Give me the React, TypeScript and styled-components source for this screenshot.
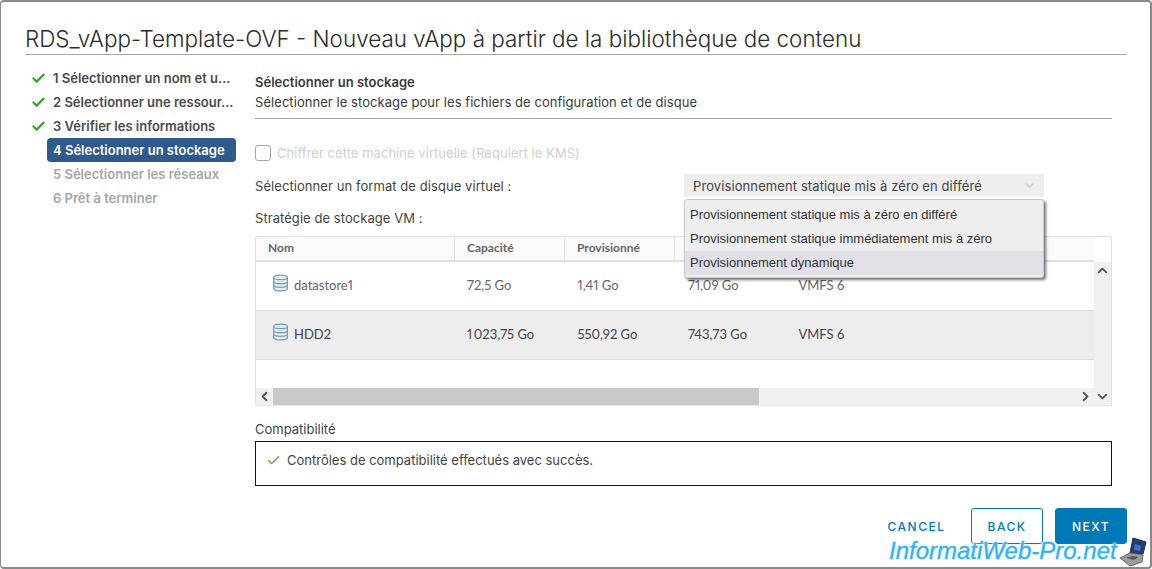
import React from "react";
import styled, { createGlobalStyle } from "styled-components";
import { ChevronDown, ChevronLeft, ChevronRight, ChevronUp, Check } from "lucide-react";

const Global = createGlobalStyle`
  html, body { margin: 0; padding: 0; background: #fff; }
  body { font-family: Inter, "Noto Sans", sans-serif; color: #333; }
  * { box-sizing: border-box; }
`;

const Modal = styled.div`
  position: relative;
  width: 1152px;
  height: 569px;
  overflow: hidden;
  background: #fff;
  border: 1px solid #8a8a8a;
  border-width: 2px 2px 2px 1px;
  border-radius: 4px;
  padding: 21px 24px 0 24px;
`;

const Title = styled.h1`
  margin: 0;
  height: 32px;
  width: 1102px;
  border-bottom: 1px solid #a8a8a8;
  font-size: 22.45px;
  line-height: 31px;
  font-weight: 300;
  color: #2b2b2b;
  white-space: nowrap;
`;

const Body = styled.div`
  display: flex;
  margin-top: 11px;
`;

const Steps = styled.ul`
  list-style: none;
  margin: 0;
  padding: 0;
  width: 230px;
  flex: none;
`;

const Step = styled.li<{ $state: "done" | "active" | "todo" }>`
  display: flex;
  align-items: center;
  height: 24px;
  position: relative;
  margin-left: 22px;
  width: 189px;
  padding-left: 6px;
  font-size: 13px;
  font-weight: 600;
  white-space: nowrap;
  border-radius: 4px;
  color: ${(p) => (p.$state === "todo" ? "#a6a6a6" : p.$state === "active" ? "#fff" : "#4a4a4a")};
  background: ${(p) => (p.$state === "active" ? "#2f5a8c" : "transparent")};
`;

const StepCheck = styled.span`
  position: absolute;
  left: -16px;
  top: 5px;
  display: flex;
  color: #3f9e2e;
`;

const Content = styled.div`
  width: 857px;
  flex: none;
`;

const SectionTitle = styled.div`
  font-size: 13px;
  font-weight: 600;
  line-height: 20px;
  margin-top: 6px;
  color: #3a3a3a;
`;

const SectionSub = styled.div`
  font-size: 13px;
  line-height: 20px;
  letter-spacing: 0.06px;
  padding-bottom: 6px;
  border-bottom: 1px solid #a8a8a8;
  color: #3a3a3a;
`;

const CheckRow = styled.label`
  display: flex;
  align-items: center;
  gap: 6px;
  margin-top: 26px;
  height: 16px;
  font-size: 13px;
  letter-spacing: 0.04px;
  color: #cfcfcf;
`;

const Box = styled.span`
  width: 16px;
  height: 16px;
  border: 1px solid #a8a8a8;
  border-radius: 3px;
  display: block;
`;

const FormatRow = styled.div`
  display: flex;
  align-items: center;
  margin-top: 13px;
  height: 23px;
  font-size: 13px;
  color: #444;
`;

const FormatLabel = styled.span`
  width: 429px;
  letter-spacing: 0.07px;
`;

const Select = styled.div`
  width: 360px;
  height: 23px;
  background: #eee;
  display: flex;
  align-items: center;
  justify-content: space-between;
  padding: 0 8px 0 9px;
  font-size: 13px;
  letter-spacing: 0.1px;
  color: #444;
  svg { color: #c4c4c4; }
`;

const PolicyLabel = styled.div`
  margin-top: 12px;
  font-size: 13px;
  line-height: 18px;
  letter-spacing: 0.06px;
  color: #444;
`;

const Menu = styled.div`
  position: absolute;
  left: 683px;
  top: 197px;
  width: 360px;
  height: 79px;
  background: #eeeeee;
  border: 1px solid #c9c9c9;
  border-radius: 3px;
  box-shadow: 2px 2px 3px rgba(0, 0, 0, 0.55);
  padding-top: 3px;
  z-index: 2;
`;

const MenuItem = styled.div<{ $hover?: boolean }>`
  height: 24px;
  line-height: 24px;
  padding-left: 5px;
  font-family: "Liberation Sans", sans-serif;
  font-size: 13px;
  color: #333;
  background: ${(p) => (p.$hover ? "#e0e0e6" : "transparent")};
`;

const Grid = styled.div`
  margin-top: 9px;
  width: 857px;
  height: 170px;
  border: 1px solid #e0e0e0;
  border-bottom-color: #e4e4e4;
  border-radius: 3px 3px 0 0;
  display: grid;
  grid-template-columns: 1fr 17px;
  grid-template-rows: 1fr 17px;
  font-family: Lato, sans-serif;
  overflow: hidden;
`;

const GridMain = styled.div`
  min-width: 0;
  overflow: hidden;
`;

const Head = styled.div`
  display: grid;
  grid-template-columns: 199px 110px 110px 110px 1fr;
  height: 25px;
  width: 855px;
  background: #fafafa;
  border-bottom: 2px solid #dedede;
`;

const HeadCell = styled.div`
  padding-left: 12px;
  line-height: 22px;
  font-size: 12px;
  font-weight: 700;
  color: #666;
  border-right: 1px solid #e4e4e4;
  &:last-child { border-right: 0; }
`;

const Row = styled.div<{ $sel?: boolean }>`
  display: grid;
  grid-template-columns: 198px 110.5px 110.5px 110.5px 1fr;
  align-items: center;
  height: 49px;
  background: ${(p) => (p.$sel ? "#ededed" : "#fff")};
  border-bottom: 1px solid #dddddd;
  font-size: 13px;
  font-variant-numeric: proportional-nums;
  color: ${(p) => (p.$sel ? "#444" : "#666")};
`;

const Cell = styled.div`
  padding-left: 13px;
  padding-bottom: 2px;
  white-space: nowrap;
`;

const NameCell = styled(Cell)`
  display: flex;
  align-items: center;
  gap: 5px;
  padding-left: 16px;
  svg { margin-top: -4px; }
`;

const VBar = styled.div`
  grid-row: 1;
  grid-column: 2;
  background: #f0f0f0;
  margin-top: 25px;
  padding-top: 1px;
  display: flex;
  justify-content: center;
  align-items: flex-start;
  color: #555;
`;

const HBar = styled.div`
  grid-row: 2;
  grid-column: 1;
  display: flex;
  align-items: center;
  background: #f0f0f0;
  color: #555;
`;

const ArrowCell = styled.div`
  width: 17px;
  height: 17px;
  display: flex;
  align-items: center;
  justify-content: center;
  flex: none;
`;

const Thumb = styled.div`
  width: 486px;
  height: 17px;
  background: #c8c8c8;
  flex: none;
`;

const HSpacer = styled.div`
  flex: 1;
`;

const CornerCell = styled.div`
  grid-row: 2;
  grid-column: 2;
  background: #f0f0f0;
  color: #555;
`;

const CompatLabel = styled.div`
  margin-top: 14px;
  font-size: 13px;
  line-height: 18px;
  color: #444;
`;

const CompatBox = styled.div`
  margin-top: 3px;
  height: 45px;
  border: 1px solid #111;
  display: flex;
  align-items: flex-start;
  gap: 6px;
  padding: 9px 0 0 10px;
  font-size: 13px;
  line-height: 18px;
  color: #444;
  svg { color: #5aa032; flex: none; margin-top: 2px; }
`;

const Actions = styled.div`
  display: flex;
  justify-content: flex-end;
  align-items: center;
  gap: 12px;
  width: 1102px;
  margin-top: 22px;
`;

const Btn = styled.button<{ $kind: "flat" | "outline" | "solid" }>`
  height: 36px;
  width: ${(p) => (p.$kind === "flat" ? "83px" : "72px")};
  margin-right: ${(p) => (p.$kind === "flat" ? "1px" : "0")};
  font-family: Inter, sans-serif;
  font-size: 12px;
  font-weight: 500;
  letter-spacing: 1.5px;
  border-radius: 3px;
  padding: 0;
  border: 1px solid ${(p) => (p.$kind === "flat" ? "transparent" : "#0079b8")};
  background: ${(p) => (p.$kind === "solid" ? "#0079b8" : "#fff")};
  color: ${(p) => (p.$kind === "solid" ? "#fff" : "#0079b8")};
`;

const Watermark = styled.div`
  position: absolute;
  left: 888px;
  top: 535px;
  font-family: "Liberation Sans", sans-serif;
  font-style: italic;
  font-size: 24px;
  line-height: 28px;
  color: #2fb2f6;
  white-space: nowrap;
  -webkit-text-stroke: 0.3px #2fb2f6;
  text-shadow: 0 0 2px #fff, 0 0 2px #fff, 0 0 3px #cdeeff;
  z-index: 3;
`;

const Laptop = styled.svg`
  position: absolute;
  left: 1118px;
  top: 535px;
  z-index: 3;
`;

const Db = () => (
  <svg width="17" height="18" viewBox="0 0 16 17" fill="#e4eef5" stroke="#7d9db3" strokeWidth="1.2">
    <path d="M1.5 3.2C1.5 1.8 4.4 1 8 1s6.500.8 6.500 2.200v10.600c0 1.400-2.900 2.200-6.500 2.200s-6.500-.8-6.500-2.200z" />
    <path d="M1.500 3.200c0 1.400 2.900 2.200 6.500 2.200s6.500-.8 6.500-2.200M1.500 7c0 1.400 2.900 2.200 6.500 2.200s6.500-.8 6.500-2.200M1.500 10.500c0 1.400 2.900 2.200 6.500 2.200s6.500-.8 6.500-2.200" fill="none" />
  </svg>
);

const Done = () => (
  <StepCheck>
    <Check size={15} strokeWidth={3.8} />
  </StepCheck>
);

export default function App() {
  return (
    <>
      <Global />
      <Modal>
        <Title>RDS_vApp-Template-OVF - Nouveau vApp à partir de la bibliothèque de contenu</Title>
        <Body>
          <Steps>
            <Step $state="done"><Done />1 Sélectionner un nom et u...</Step>
            <Step $state="done"><Done />2 Sélectionner une ressour...</Step>
            <Step $state="done"><Done />3 Vérifier les informations</Step>
            <Step $state="active">4 Sélectionner un stockage</Step>
            <Step $state="todo">5 Sélectionner les réseaux</Step>
            <Step $state="todo">6 Prêt à terminer</Step>
          </Steps>
          <Content>
            <SectionTitle>Sélectionner un stockage</SectionTitle>
            <SectionSub>Sélectionner le stockage pour les fichiers de configuration et de disque</SectionSub>
            <CheckRow><Box />Chiffrer cette machine virtuelle (Requiert le KMS)</CheckRow>
            <FormatRow>
              <FormatLabel>Sélectionner un format de disque virtuel :</FormatLabel>
              <Select>
                Provisionnement statique mis à zéro en différé
                <ChevronDown size={13} />
              </Select>
            </FormatRow>
            <PolicyLabel>Stratégie de stockage VM :</PolicyLabel>
            <Grid>
              <GridMain>
                <Head>
                  <HeadCell>Nom</HeadCell>
                  <HeadCell>Capacité</HeadCell>
                  <HeadCell>Provisionné</HeadCell>
                  <HeadCell />
                  <HeadCell />
                </Head>
                <Row>
                  <NameCell><Db />datastore1</NameCell>
                  <Cell>72,5 Go</Cell>
                  <Cell>1,41 Go</Cell>
                  <Cell>71,09 Go</Cell>
                  <Cell>VMFS 6</Cell>
                </Row>
                <Row $sel>
                  <NameCell><Db />HDD2</NameCell>
                  <Cell>1{"\u2009"}023,75 Go</Cell>
                  <Cell>550,92 Go</Cell>
                  <Cell>743,73 Go</Cell>
                  <Cell>VMFS 6</Cell>
                </Row>
              </GridMain>
              <VBar><ChevronUp size={15} strokeWidth={3} /></VBar>
              <HBar>
                <ArrowCell><ChevronLeft size={15} strokeWidth={3} /></ArrowCell>
                <Thumb />
                <HSpacer />
                <ArrowCell><ChevronRight size={15} strokeWidth={3} /></ArrowCell>
              </HBar>
              <CornerCell><ArrowCell><ChevronDown size={15} strokeWidth={3} /></ArrowCell></CornerCell>
            </Grid>
            <CompatLabel>Compatibilité</CompatLabel>
            <CompatBox>
              <Check size={15} strokeWidth={2} />
              Contrôles de compatibilité effectués avec succès.
            </CompatBox>
          </Content>
        </Body>
        <Actions>
          <Btn $kind="flat">CANCEL</Btn>
          <Btn $kind="outline">BACK</Btn>
          <Btn $kind="solid">NEXT</Btn>
        </Actions>
        <Menu>
          <MenuItem>Provisionnement statique mis à zéro en différé</MenuItem>
          <MenuItem>Provisionnement statique immédiatement mis à zéro</MenuItem>
          <MenuItem $hover>Provisionnement dynamique</MenuItem>
        </Menu>
        <Watermark>InformatiWeb-Pro.net</Watermark>
        <Laptop width="30" height="30" viewBox="0 0 30 30">
          <path d="M14 1l13 4-3 12-13-1z" fill="#1f3f7a" stroke="#2a2a2a" />
          <path d="M16 7l6 2-1 5-6-1z" fill="#3f74c4" />
          <path d="M1 21l10-5 13 2-1 7-12 4z" fill="#9c9c9c" stroke="#666" />
          <path d="M7 21l6-2 7 1-5 3z" fill="#5c5c5c" />
        </Laptop>
      </Modal>
    </>
  );
}
